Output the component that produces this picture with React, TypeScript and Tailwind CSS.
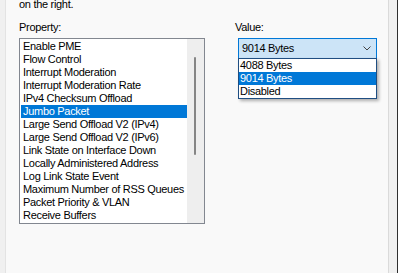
const properties = [
  "Enable PME",
  "Flow Control",
  "Interrupt Moderation",
  "Interrupt Moderation Rate",
  "IPv4 Checksum Offload",
  "Jumbo Packet",
  "Large Send Offload V2 (IPv4)",
  "Large Send Offload V2 (IPv6)",
  "Link State on Interface Down",
  "Locally Administered Address",
  "Log Link State Event",
  "Maximum Number of RSS Queues",
  "Packet Priority & VLAN",
  "Receive Buffers",
];

const values = ["4088 Bytes", "9014 Bytes", "Disabled"];

export default function App() {
  return (
    <div
      className="flex h-[273px] w-[398px] overflow-hidden bg-[#f0f0f0] text-[11px] leading-[13px] tracking-[-0.3px] text-black"
      style={{ fontFamily: '"Liberation Sans", Arial, sans-serif' }}
    >
      <div className="w-[6px] border-r border-[#e3e3e3] bg-[#f0f0f0]" />
      <div className="flex-1 border-r border-[#dadada] bg-[#f9f9f9] pl-[13px]">
        <div className="-mt-[2px] h-[13px]">on the right.</div>
        <div className="mt-[10px] flex">
          {/* property list */}
          <div className="flex w-[186px] flex-col">
            <div className="h-[17px]">Property:</div>
            <div className="flex h-[186px] border border-[#828790] bg-white">
              <div className="flex-1 overflow-hidden pl-[1px] pt-[1px]">
                {properties.map((p) => (
                  <div
                    key={p}
                    className={
                      p === "Jumbo Packet"
                        ? "h-[13px] whitespace-nowrap bg-[#0078d7] pl-[2px] text-white"
                        : "h-[13px] whitespace-nowrap pl-[2px]"
                    }
                  >
                    {p}
                  </div>
                ))}
              </div>
              <div className="flex w-[17px] flex-col items-center bg-[#eeeeee] pt-[18px]">
                <div className="ml-[-1px] h-[98px] w-[2px] rounded-full bg-[#858585]" />
              </div>
            </div>
          </div>

          {/* value combo */}
          <div className="ml-[30px] flex flex-col">
            <div className="h-[17px]">Value:</div>
            <div className="relative ml-[3px] w-[139px]">
              <div className="flex h-[21px] items-center justify-between border border-[#0078d7] bg-[#cce4f7] pl-[3px] pr-[5px]">
                <span>9014 Bytes</span>
                <svg width="8" height="5" viewBox="0 0 8 5" fill="none">
                  <path d="M0.5 0.5 L4 4 L7.5 0.5" stroke="#444" strokeWidth="1" />
                </svg>
              </div>
              <div className="absolute left-0 top-[20px] w-[139px] border border-[#1f4e82] bg-white shadow-[2px_2px_3px_rgba(0,0,0,0.3)]">
                {values.map((v) => (
                  <div
                    key={v}
                    className={
                      v === "9014 Bytes"
                        ? "h-[13px] bg-[#0078d7] pl-[1px] text-white"
                        : "h-[13px] pl-[1px]"
                    }
                  >
                    {v}
                  </div>
                ))}
              </div>
            </div>
          </div>
        </div>
      </div>
      <div className="w-[8px] bg-[#f0f0f0]" />
      <div className="w-[1px] bg-[#2e2e2e]" />
    </div>
  );
}
